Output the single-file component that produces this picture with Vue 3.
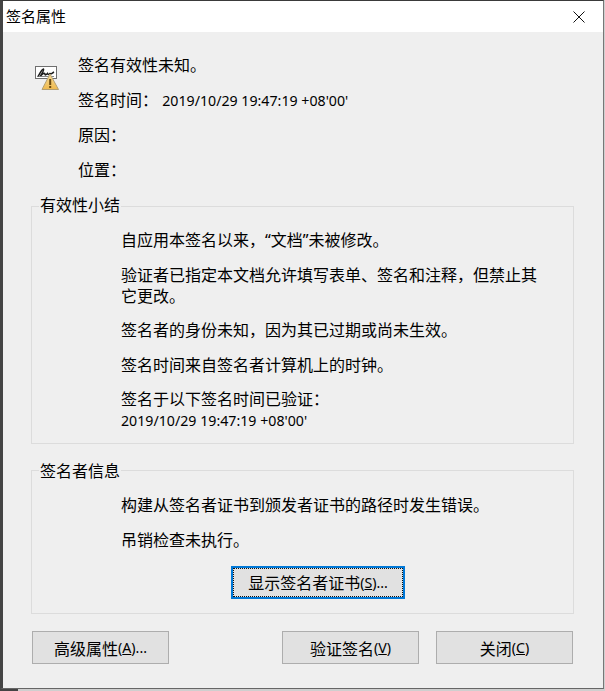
<script setup>
const stamp = "2019/10/29 19:47:19 +08'00'"
const summary = [
  ['自应用本签名以来，“文档”未被修改。'],
  ['验证者已指定本文档允许填写表单、签名和注释，但禁止其', '它更改。'],
  ['签名者的身份未知，因为其已过期或尚未生效。'],
  ['签名时间来自签名者计算机上的时钟。'],
]
</script>

<template>
  <div class="screen">
    <div class="window">
      <header class="titlebar">
        <span class="title">签名属性</span>
        <svg class="close" width="12" height="12" viewBox="0 0 12 12">
          <path d="M0.5 0.5 L11.5 11.5 M11.5 0.5 L0.5 11.5" stroke="#111" stroke-width="1" fill="none" />
        </svg>
      </header>
      <main class="body">
        <section class="head">
          <svg class="sig-icon" width="26" height="26" viewBox="0 0 26 26">
            <defs>
              <linearGradient id="warn" x1="0" y1="0" x2="0" y2="1">
                <stop offset="0" stop-color="#f8dc94" />
                <stop offset="1" stop-color="#eeb94f" />
              </linearGradient>
            </defs>
            <rect x="0.5" y="0.5" width="21" height="12" fill="#fff" stroke="#6f6f6f" />
            <path d="M3 10.5 C5 7 7 3 8.5 3 C9.5 4 6 9 5.5 10 C7.5 8 9 6.5 10 8 C10 9.5 11 9 12.5 7.5 C13 9 14 8.5 15 7.5 C16 8.5 17 7 19 6" fill="none" stroke="#1c1c1c" stroke-width="1.5" />
            <path d="M2 10.5 H19" stroke="#555" stroke-width="0.7" />
            <path d="M15 8 L23.5 23.5 H7 Z" fill="url(#warn)" stroke="#b39f73" stroke-width="1" stroke-linejoin="round" />
            <rect x="14.2" y="13" width="2" height="6" fill="#6b4a10" />
            <rect x="14.2" y="20" width="2" height="2" fill="#6b4a10" />
          </svg>
          <div class="meta">
            <p>签名有效性未知。</p>
            <p>签名时间： <span class="num">{{ stamp }}</span></p>
            <p>原因：</p>
            <p>位置：</p>
          </div>
        </section>

        <section class="group summary">
          <div class="legend">有效性小结</div>
          <div class="paras">
            <p v-for="(lines, i) in summary" :key="i">
              <span v-for="l in lines" :key="l" class="line">{{ l }}</span>
            </p>
            <p>
              <span class="line">签名于以下签名时间已验证：</span>
              <span class="line num">{{ stamp }}</span>
            </p>
          </div>
        </section>

        <section class="group signer">
          <div class="legend">签名者信息</div>
          <div class="paras">
            <p>构建从签名者证书到颁发者证书的路径时发生错误。</p>
            <p>吊销检查未执行。</p>
          </div>
          <div class="cert-row">
            <button class="btn focused"><span class="focus-inner">显示签名者证书<span class="num">(<u>S</u>)...</span></span></button>
          </div>
        </section>

        <footer class="actions">
          <button class="btn">高级属性<span class="num">(<u>A</u>)...</span></button>
          <div class="right">
            <button class="btn">验证签名<span class="num">(<u>V</u>)</span></button>
            <button class="btn">关闭<span class="num">(<u>C</u>)</span></button>
          </div>
        </footer>
      </main>
    </div>
  </div>
</template>

<style scoped>
.screen {
  width: 605px;
  height: 691px;
  background: linear-gradient(90deg, #444 18px, #cfcfcf 18px);
  overflow: hidden;
  box-sizing: border-box;
  font-family: "Noto Sans", "Noto Sans CJK SC", sans-serif;
  font-size: 16px;
  color: #000;
}
.num {
  font-size: 14.2px;
}
.window {
  width: 604px;
  height: 689px;
  box-sizing: border-box;
  border-top: 1px solid #3a3a3a;
  border-left: 3px solid #444;
  border-right: 1px solid #777;
  border-bottom: 1px solid #666;
  background: #efefef;
  display: flex;
  flex-direction: column;
}
.titlebar {
  height: 31px;
  flex: none;
  background: #fff;
  display: flex;
  align-items: center;
  justify-content: space-between;
  padding: 0 18px 0 3px;
}
.title {
  font-size: 15px;
  line-height: 21px;
}
.close {
  display: block;
}
.body {
  flex: 1;
  display: flex;
  flex-direction: column;
  padding: 23px 29px 0 28px;
}
p {
  margin: 0;
  line-height: 21px;
  white-space: pre-wrap;
}
.head {
  display: flex;
  align-items: flex-start;
}
.sig-icon {
  flex: none;
  margin: 11px 17px 0 4px;
  display: block;
}
.meta {
  display: flex;
  flex-direction: column;
  gap: 14px;
}
.group {
  border: 1px solid #dcdcdc;
  padding: 0 0 0 89px;
}
.legend {
  width: fit-content;
  margin: -12px 0 0 -82px;
  padding: 0 1px;
  line-height: 21px;
  background: #efefef;
}
.summary {
  margin-top: 25px;
  height: 238px;
  box-sizing: border-box;
}
.signer {
  margin-top: 26px;
  height: 144px;
  box-sizing: border-box;
}
.signer .legend {
  margin-top: -10px;
}
.paras {
  margin-top: 14px;
  display: flex;
  flex-direction: column;
  gap: 13.5px;
}
.signer .paras {
  margin-top: 13px;
}
.line {
  display: block;
}
.cert-row {
  margin-top: 15px;
  padding-left: 110px;
}
.btn {
  font: inherit;
  color: #000;
  width: 137px;
  height: 33px;
  box-sizing: border-box;
  border: 1px solid #adadad;
  background: #e1e1e1;
  padding: 0;
  display: inline-flex;
  align-items: center;
  justify-content: center;
}
.btn u {
  text-underline-offset: 1px;
}
.focused {
  width: 174px;
  height: 33px;
  border: 2px solid #0078d7;
  padding: 0;
}
.focus-inner {
  flex: 1;
  align-self: stretch;
  display: flex;
  align-items: center;
  justify-content: center;
  border: 1px dotted #111;
}
.actions {
  margin-top: 17px;
  display: flex;
  justify-content: space-between;
  padding: 0 1px;
}
.right {
  display: flex;
  gap: 17px;
}
</style>

<style>
html, body {
  margin: 0;
  background: #cfcfcf;
}
</style>
